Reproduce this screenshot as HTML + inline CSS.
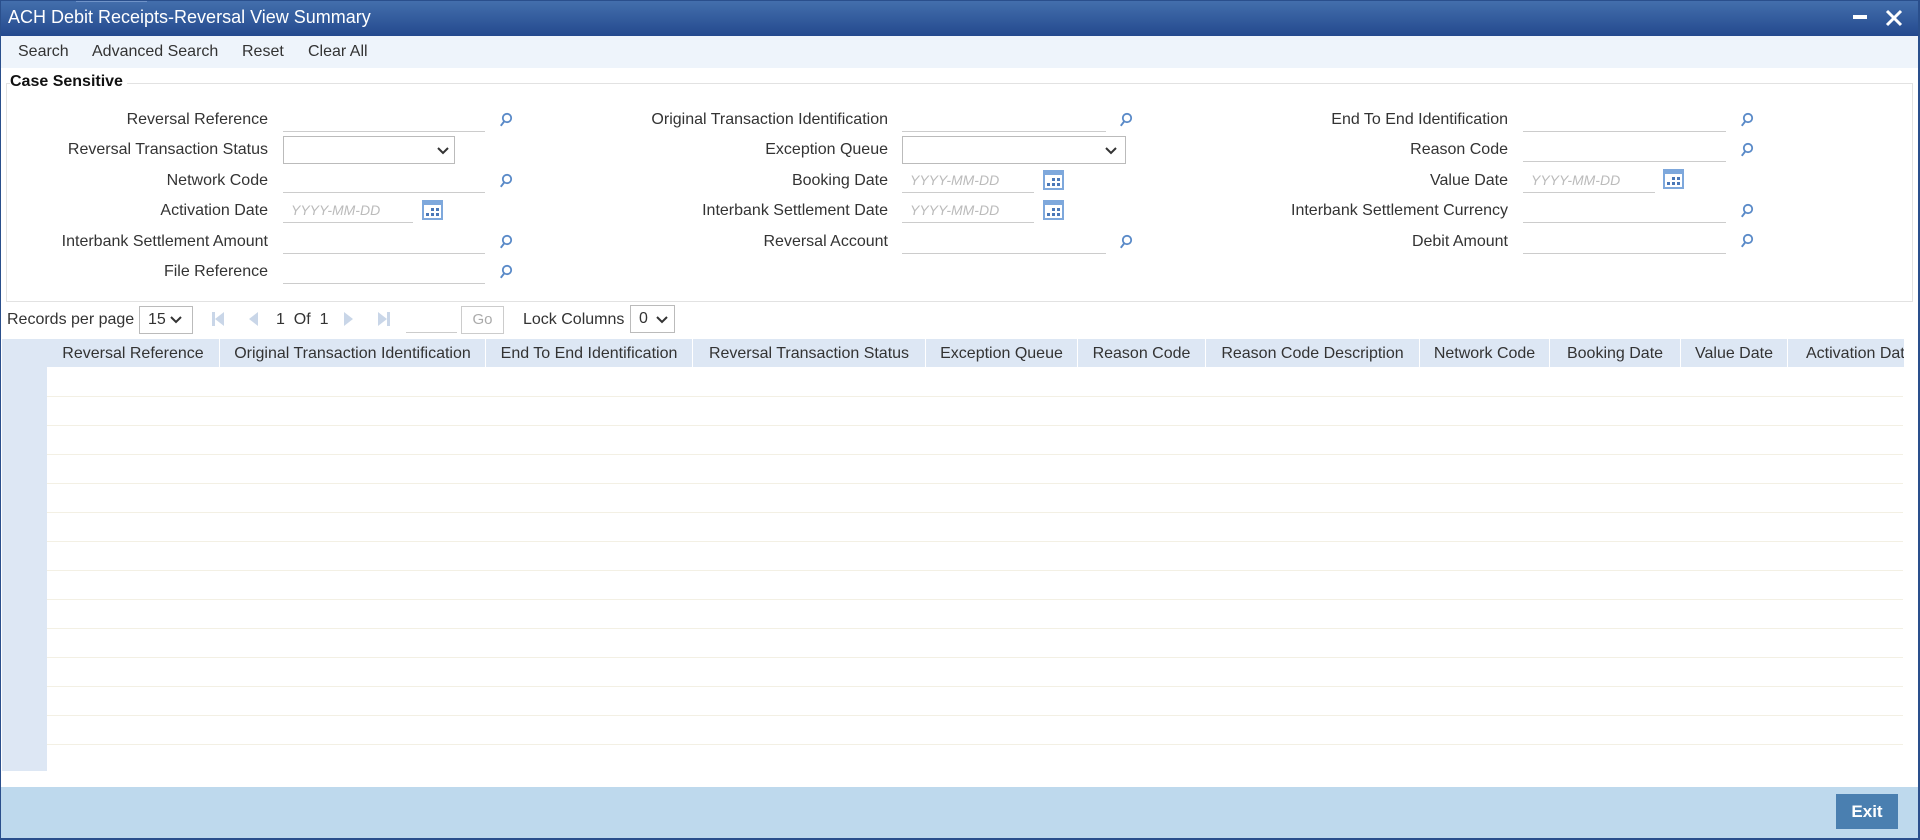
<!DOCTYPE html>
<html><head><meta charset="utf-8"><style>
*{box-sizing:border-box;margin:0;padding:0}
body{width:1920px;height:840px;overflow:hidden;background:#fff;font-family:"Liberation Sans",Arial,sans-serif;color:#333;position:relative}
.a{position:absolute}
.frame{left:0;top:0;width:1920px;height:840px;border:1px solid #2a4f8c;border-right-width:2px;border-bottom-width:2px}
.title{left:0;top:0;width:1920px;height:36px;background:linear-gradient(#4470ad,#24498e);color:#fff;font-size:18px;line-height:34px;padding-left:8px}
.tb{left:0;top:36px;width:1920px;height:32px;background:#eef4fb;font-size:16px;line-height:32px}
.lbl{font-size:16px;text-align:right;line-height:20px;white-space:nowrap}
.inp{height:26px;border-bottom:1px solid #ccc}
.sel{height:28px;border:1px solid #bbb;background:#fff}
.ph{font-size:14px;font-style:italic;color:#bbb;line-height:26px;padding-left:8px}
.th{top:339px;height:28px;background:#dde7f4;font-size:16px;line-height:29px;text-align:center;border-right:1px solid #fff;white-space:nowrap;overflow:hidden}
.row{left:47px;width:1856px;height:1px;background:#f3f0e4}
</style></head><body>
<div class="a title">ACH Debit Receipts-Reversal View Summary</div>
<div class="a" style="left:76px;top:0;width:71px;height:2px;background:#6f93c8"></div>
<div class="a" style="left:1853px;top:15px;width:14px;height:4px;background:#fff"></div>
<svg class="a" style="left:1885px;top:9px" width="18" height="18"><path d="M2 2L16 16M16 2L2 16" stroke="#fff" stroke-width="3"/></svg>
<div class="a tb"><span class="a" style="left:18px">Search</span><span class="a" style="left:92px">Advanced Search</span><span class="a" style="left:242px">Reset</span><span class="a" style="left:308px">Clear All</span></div>
<div class="a" style="left:6px;top:83px;width:1907px;height:219px;border:1px solid #e2e2e2"></div>
<div class="a" style="left:10px;top:73px;font-size:16px;font-weight:bold;color:#111;background:#fff;padding-right:4px">Case Sensitive</div>

<!-- col1 -->
<div class="a lbl" style="right:1652px;top:110px">Reversal Reference</div>
<div class="a inp" style="left:283px;top:106px;width:202px"></div>
<div class="a lbl" style="right:1652px;top:140px">Reversal Transaction Status</div>
<div class="a sel" style="left:283px;top:136px;width:172px"></div>
<div class="a lbl" style="right:1652px;top:171px">Network Code</div>
<div class="a inp" style="left:283px;top:167px;width:202px"></div>
<div class="a lbl" style="right:1652px;top:201px">Activation Date</div>
<div class="a inp ph" style="left:283px;top:197px;width:130px">YYYY-MM-DD</div>
<div class="a lbl" style="right:1652px;top:232px">Interbank Settlement Amount</div>
<div class="a inp" style="left:283px;top:228px;width:202px"></div>
<div class="a lbl" style="right:1652px;top:262px">File Reference</div>
<div class="a inp" style="left:283px;top:258px;width:202px"></div>
<!-- col2 -->
<div class="a lbl" style="right:1032px;top:110px">Original Transaction Identification</div>
<div class="a inp" style="left:902px;top:106px;width:204px"></div>
<div class="a lbl" style="right:1032px;top:140px">Exception Queue</div>
<div class="a sel" style="left:902px;top:136px;width:224px"></div>
<div class="a lbl" style="right:1032px;top:171px">Booking Date</div>
<div class="a inp ph" style="left:902px;top:167px;width:132px">YYYY-MM-DD</div>
<div class="a lbl" style="right:1032px;top:201px">Interbank Settlement Date</div>
<div class="a inp ph" style="left:902px;top:197px;width:132px">YYYY-MM-DD</div>
<div class="a lbl" style="right:1032px;top:232px">Reversal Account</div>
<div class="a inp" style="left:902px;top:228px;width:204px"></div>
<!-- col3 -->
<div class="a lbl" style="right:412px;top:110px">End To End Identification</div>
<div class="a inp" style="left:1523px;top:106px;width:203px"></div>
<div class="a lbl" style="right:412px;top:140px">Reason Code</div>
<div class="a inp" style="left:1523px;top:136px;width:203px"></div>
<div class="a lbl" style="right:412px;top:171px">Value Date</div>
<div class="a inp ph" style="left:1523px;top:167px;width:132px">YYYY-MM-DD</div>
<div class="a lbl" style="right:412px;top:201px">Interbank Settlement Currency</div>
<div class="a inp" style="left:1523px;top:197px;width:203px"></div>
<div class="a lbl" style="right:412px;top:232px">Debit Amount</div>
<div class="a inp" style="left:1523px;top:228px;width:203px"></div>

<svg class="a" style="left:0;top:0" width="1920" height="310">
<defs>
<g id="s"><circle cx="7" cy="-3" r="4.2" fill="none" stroke="#5a8ac8" stroke-width="1.8"/><path d="M4.3 0.2L0.8 4.8" stroke="#5a8ac8" stroke-width="2"/></g>
<g id="c"><rect x="0" y="0" width="21" height="20" fill="#7ea8dc"/><rect x="2" y="5" width="17" height="13" fill="#fff"/><g fill="#4a78b8"><rect x="9" y="8" width="3" height="3"/><rect x="14" y="8" width="3" height="3"/><rect x="4" y="13" width="3" height="3"/><rect x="9" y="13" width="3" height="3"/><rect x="14" y="13" width="3" height="3"/></g></g>
<path id="v" d="M0 0L5 5L10 0" fill="none" stroke="#333" stroke-width="2"/>
</defs>
<use href="#s" x="500" y="121"/><use href="#s" x="500" y="182"/><use href="#s" x="500" y="243"/><use href="#s" x="500" y="273"/>
<use href="#s" x="1120" y="121"/><use href="#s" x="1120" y="243"/>
<use href="#s" x="1741" y="121"/><use href="#s" x="1741" y="151"/><use href="#s" x="1741" y="212"/><use href="#s" x="1741" y="242"/>
<use href="#c" x="422" y="200"/><use href="#c" x="1043" y="170"/><use href="#c" x="1043" y="200"/><use href="#c" x="1663" y="169"/>
<use href="#v" x="438" y="148"/><use href="#v" x="1106" y="148"/>
</svg>

<!-- pagination -->
<div class="a" style="left:7px;top:310px;font-size:16px;line-height:20px">Records per page</div>
<div class="a sel" style="left:139px;top:306px;width:54px;font-size:16px;line-height:26px;padding-left:8px">15</div>
<div class="a" style="left:276px;top:310px;font-size:16px;line-height:20px">1&nbsp;&nbsp;Of&nbsp;&nbsp;1</div>
<div class="a" style="left:406px;top:306px;width:51px;height:27px;border-bottom:1px solid #ccc"></div>
<div class="a" style="left:461px;top:306px;width:43px;height:28px;border:1px solid #ccc;font-size:15px;color:#aaa;text-align:center;line-height:26px">Go</div>
<div class="a" style="left:523px;top:310px;font-size:16px;line-height:20px">Lock Columns</div>
<div class="a sel" style="left:630px;top:305px;width:45px;font-size:16px;line-height:26px;padding-left:8px">0</div>
<svg class="a" style="left:0;top:300px" width="700" height="40">
<path d="M171 17L176 22L181 17" fill="none" stroke="#333" stroke-width="2"/>
<path d="M657 17L662 22L667 17" fill="none" stroke="#333" stroke-width="2"/>
<g fill="#c9d6e8"><rect x="212" y="12" width="3" height="14"/><path d="M224 12L215 19L224 26Z"/><path d="M258 12L249 19L258 26Z"/><path d="M344 12L353 19L344 26Z"/><path d="M378 12L387 19L378 26Z"/><rect x="387" y="12" width="3" height="14"/></g>
</svg>

<!-- table -->
<div class="a" style="left:2px;top:339px;width:45px;height:432px;background:#dde7f4"></div>
<div class="a th" style="left:47px;width:173px">Reversal Reference</div>
<div class="a th" style="left:220px;width:266px">Original Transaction Identification</div>
<div class="a th" style="left:486px;width:207px">End To End Identification</div>
<div class="a th" style="left:693px;width:233px">Reversal Transaction Status</div>
<div class="a th" style="left:926px;width:152px">Exception Queue</div>
<div class="a th" style="left:1078px;width:128px">Reason Code</div>
<div class="a th" style="left:1206px;width:214px">Reason Code Description</div>
<div class="a th" style="left:1420px;width:130px">Network Code</div>
<div class="a th" style="left:1550px;width:131px">Booking Date</div>
<div class="a th" style="left:1681px;width:107px">Value Date</div>
<div class="a th" style="left:1788px;width:117px;text-align:left;padding-left:18px">Activation Date</div>
<div class="a" style="left:1905px;top:339px;width:13px;height:432px;background:#fff"></div>
<div class="a row" style="top:396px"></div><div class="a row" style="top:425px"></div><div class="a row" style="top:454px"></div><div class="a row" style="top:483px"></div><div class="a row" style="top:512px"></div><div class="a row" style="top:541px"></div><div class="a row" style="top:570px"></div><div class="a row" style="top:599px"></div><div class="a row" style="top:628px"></div><div class="a row" style="top:657px"></div><div class="a row" style="top:686px"></div><div class="a row" style="top:715px"></div><div class="a row" style="top:744px"></div>

<div class="a" style="left:0;top:787px;width:1920px;height:53px;background:#bed9ed"></div>
<div class="a" style="left:1836px;top:794px;width:62px;height:35px;background:#4a7fb0;color:#fff;font-weight:bold;font-size:17px;text-align:center;line-height:35px">Exit</div>
<div class="a frame"></div>
</body></html>
